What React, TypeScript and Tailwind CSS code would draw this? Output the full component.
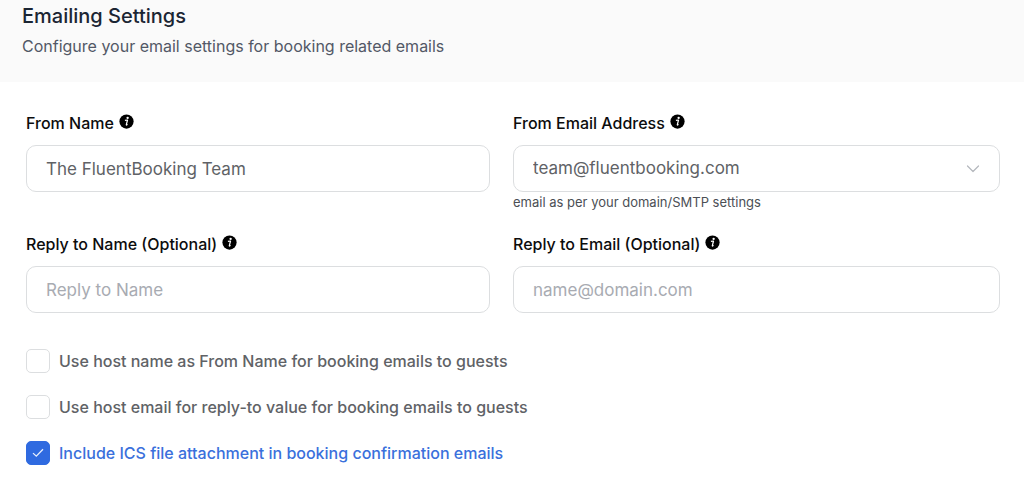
import React, { useState } from "react";

const fieldClass =
  "block h-[47px] w-full rounded-[10px] border border-[#dcdee0] bg-white px-[19px] text-[17px] text-[#606266] outline-none placeholder:text-[#a8abb2] focus:border-[#2f6ae0]";

const initialOptions = [
  {
    id: "host-name",
    label: "Use host name as From Name for booking emails to guests",
    checked: false,
  },
  {
    id: "host-email",
    label: "Use host email for reply-to value for booking emails to guests",
    checked: false,
  },
  {
    id: "ics-file",
    label: "Include ICS file attachment in booking confirmation emails",
    checked: true,
  },
];

const InfoIcon = () => (
  <svg viewBox="0 0 16 16" className="mb-1 size-[15px]">
    <circle cx="8" cy="8" r="7.6" fill="#000000" />
    <circle cx="9.2" cy="4.1" r="1.25" fill="#ffffff" />
    <path
      d="M6.3 6.9L9.1 6.4L7.8 11.4C7.7 12 8.2 11.9 9.1 11.1"
      fill="none"
      stroke="#ffffff"
      strokeWidth="1.3"
      strokeLinejoin="round"
    />
  </svg>
);

const FieldLabel = ({ id, text }: { id: string; text: string }) => (
  <div className="mb-2.5 flex h-6 items-center gap-[5px]">
    <label htmlFor={id} className="text-base font-medium text-[#0c0c0d]">
      {text}
    </label>
    <InfoIcon />
  </div>
);

const App = () => {
  const [options, setOptions] = useState(initialOptions);

  const toggle = (id: string) => {
    setOptions(
      options.map((o) => (o.id === id ? { ...o, checked: !o.checked } : o))
    );
  };

  return (
    <div className="min-h-screen bg-white font-['Inter',sans-serif]">
      <header className="bg-[#fafafa] px-[22px] pt-1 pb-6">
        <h1 className="text-xl leading-6 font-medium text-[#1b2533]">
          Emailing Settings
        </h1>
        <p className="mt-1.5 text-base leading-6 text-[#525866]">
          Configure your email settings for booking related emails
        </p>
      </header>

      <form className="pt-[29px] pr-6 pb-4 pl-[26px]">
        <div className="grid grid-cols-[464fr_487fr] gap-x-[23px]">
          <div>
            <FieldLabel id="from-name" text="From Name" />
            <input
              id="from-name"
              type="text"
              defaultValue="The FluentBooking Team"
              className={fieldClass}
            />
          </div>
          <div>
            <FieldLabel id="from-email" text="From Email Address" />
            <div className="relative">
              <select
                id="from-email"
                className={`${fieldClass} appearance-none`}
              >
                <option>team@fluentbooking.com</option>
              </select>
              <svg
                viewBox="0 0 14 8"
                className="pointer-events-none absolute top-5 right-5 h-2 w-3.5"
                fill="none"
                stroke="#b4b7bd"
                strokeWidth="1.2"
                strokeLinecap="round"
                strokeLinejoin="round"
              >
                <path d="M1.5 1L7 6.5L12.5 1" />
              </svg>
            </div>
            <p className="text-[13px] leading-5 text-[#4b4f55]">
              email as per your domain/SMTP settings
            </p>
          </div>
          <div className="mt-5">
            <FieldLabel id="reply-name" text="Reply to Name (Optional)" />
            <input
              id="reply-name"
              type="text"
              placeholder="Reply to Name"
              className={fieldClass}
            />
          </div>
          <div className="mt-5">
            <FieldLabel id="reply-email" text="Reply to Email (Optional)" />
            <input
              id="reply-email"
              type="email"
              placeholder="name@domain.com"
              className={fieldClass}
            />
          </div>
        </div>

        <div className="mt-9 flex flex-col gap-[22px]">
          {options.map((option) => (
            <div key={option.id} className="flex h-6 items-center">
              <span className="relative mr-[9px] size-6">
                <input
                  id={option.id}
                  type="checkbox"
                  checked={option.checked}
                  onChange={() => toggle(option.id)}
                  className="peer block size-6 appearance-none rounded-[5px] border border-[#dcdee0] bg-white checked:border-[#2f6ae0] checked:bg-[#2f6ae0]"
                />
                <svg
                  viewBox="0 0 24 24"
                  className="pointer-events-none absolute inset-0 hidden size-6 peer-checked:block"
                  fill="none"
                  stroke="#e8effc"
                  strokeWidth="1.3"
                >
                  <path d="M7 12.1L10.3 15.2L17 8.2" />
                </svg>
              </span>
              <label
                htmlFor={option.id}
                className={`text-base font-medium ${
                  option.checked ? "text-[#3a70dc]" : "text-[#606266]"
                }`}
              >
                {option.label}
              </label>
            </div>
          ))}
        </div>
      </form>
    </div>
  );
};

export default App;
